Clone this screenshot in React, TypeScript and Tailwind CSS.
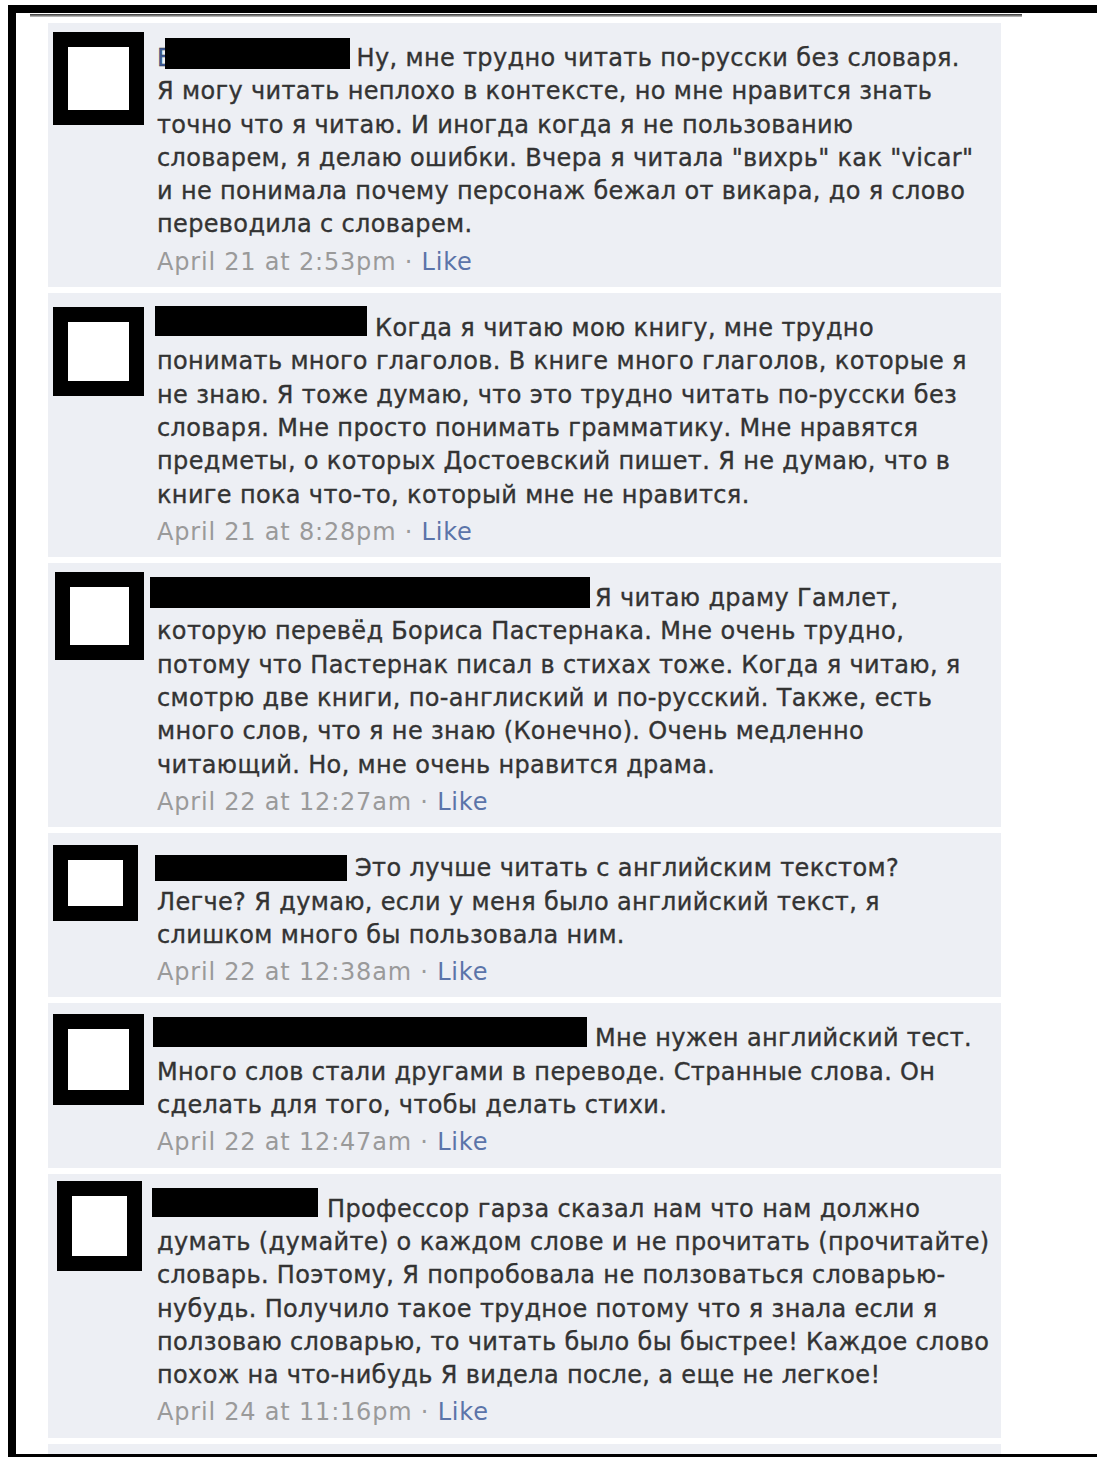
import React from "react";

type Comment = {
  avatar: string;
  nameBox: string;
  after: string;
  lead?: string;
  first: string;
  lines: string[];
  time: string;
};

const comments: Comment[] = [
  {
    avatar: "ml-[5px] mt-[9px] w-[91px] h-[93px] border-[15px]",
    lead: "E",
    nameBox: "ml-[-8px] w-[185px] h-[31px] mt-[-4px]",
    after: "ml-[7px]",
    first: "Ну, мне трудно читать по-русски без словаря.",
    lines: [
      "Я могу читать неплохо в контексте, но мне нравится знать",
      "точно что я читаю. И иногда когда я не пользованию",
      "словарем, я делаю ошибки. Вчера я читала \"вихрь\" как \"vicar\"",
      "и не понимала почему персонаж бежал от викара, до я слово",
      "переводила с словарем.",
    ],
    time: "April 21 at 2:53pm",
  },
  {
    avatar: "ml-[5px] mt-[14px] w-[91px] h-[89px] border-[15px]",
    nameBox: "ml-[-2px] w-[212px] h-[30px] mt-[-6px]",
    after: "ml-[8px]",
    first: "Когда я читаю мою книгу, мне трудно",
    lines: [
      "понимать много глаголов. В книге много глаголов, которые я",
      "не знаю. Я тоже думаю, что это трудно читать по-русски без",
      "словаря. Мне просто понимать грамматику. Мне нравятся",
      "предметы, о которых Достоевский пишет. Я не думаю, что в",
      "книге пока что-то, который мне не нравится.",
    ],
    time: "April 21 at 8:28pm",
  },
  {
    avatar: "ml-[7px] mt-[9px] w-[89px] h-[88px] border-[15px]",
    nameBox: "ml-[-7px] w-[440px] h-[31px] mt-[-5px]",
    after: "ml-[5px]",
    first: "Я читаю драму Гамлет,",
    lines: [
      "которую перевёд Бориса Пастернака. Мне очень трудно,",
      "потому что Пастернак писал в стихах тоже. Когда я читаю, я",
      "смотрю две книги, по-англиский и по-русский. Также, есть",
      "много слов, что я не знаю (Конечно). Очень медленно",
      "читающий. Но, мне очень нравится драма.",
    ],
    time: "April 22 at 12:27am",
  },
  {
    avatar: "ml-[5px] mt-[12px] w-[85px] h-[76px] border-[15px]",
    nameBox: "ml-[-2px] w-[192px] h-[26px] mt-[3px]",
    after: "ml-[8px]",
    first: "Это лучше читать с английским текстом?",
    lines: [
      "Легче? Я думаю, если у меня было английский текст, я",
      "слишком много бы пользовала ним.",
    ],
    time: "April 22 at 12:38am",
  },
  {
    avatar: "ml-[5px] mt-[11px] w-[91px] h-[91px] border-[15px]",
    nameBox: "ml-[-4px] w-[434px] h-[30px] mt-[-5px]",
    after: "ml-[8px]",
    first: "Мне нужен английский тест.",
    lines: [
      "Много слов стали другами в переводе. Странные слова. Он",
      "сделать для того, чтобы делать стихи.",
    ],
    time: "April 22 at 12:47am",
  },
  {
    avatar: "ml-[9px] mt-[7px] w-[85px] h-[90px] border-[15px]",
    nameBox: "ml-[-5px] w-[166px] h-[29px] mt-[-5px]",
    after: "ml-[9px]",
    first: "Профессор гарза сказал нам что нам должно",
    lines: [
      "думать (думайте) о каждом слове и не прочитать (прочитайте)",
      "словарь. Поэтому, Я попробовала не ползоваться словарью-",
      "нубудь. Получило такое трудное потому что я знала если я",
      "ползоваю словарью, то читать было бы быстрее! Каждое слово",
      "похож на что-нибудь Я видела после, а еще не легкое!",
    ],
    time: "April 24 at 11:16pm",
  },
];

function CommentCard({ c }: { c: Comment }) {
  return (
    <div className="flex items-start bg-[#edeff4]">
      <div className="w-[109px] shrink-0">
        <div className={`${c.avatar} border-black bg-white`} />
      </div>
      <div className="pt-[19px] pb-[8px] whitespace-nowrap">
        <div className="tracking-[0.35px] [-webkit-text-stroke:0.35px_#333333]">
          <div className="flex items-start">
            {c.lead && <span className="shrink-0 text-[#3b5998]">{c.lead}</span>}
            <div className={`${c.nameBox} relative shrink-0 bg-black`} />
            <span className={c.after}>{c.first}</span>
          </div>
          {c.lines.map((l, i) => (
            <div key={i}>{l}</div>
          ))}
        </div>
        <div className="mt-[4px] tracking-[0.8px] text-[#9a9a9a]">
          {c.time} · <span className="text-[#5b74a9]">Like</span>
        </div>
      </div>
    </div>
  );
}

export default function App() {
  return (
    <div className="w-[1097px] h-[1457px] overflow-hidden bg-white font-['DejaVu_Sans',sans-serif] text-[24px] leading-[33.3px] text-[#333333]">
      <div className="ml-[8px] mt-[5px] h-[1452px] overflow-hidden border-t-[8px] border-l-[8px] border-b-[3px] border-black">
        <div className="ml-[14px] mt-[1px] h-[3px] w-[992px] bg-linear-to-b from-[#333333] to-[#cccccc]" />
        <div className="ml-[32px] mt-[6px] flex w-[953px] flex-col gap-[6px]">
          {comments.map((c, i) => (
            <CommentCard key={i} c={c} />
          ))}
          <div className="h-[12px] bg-[#edeff4]" />
        </div>
      </div>
    </div>
  );
}
